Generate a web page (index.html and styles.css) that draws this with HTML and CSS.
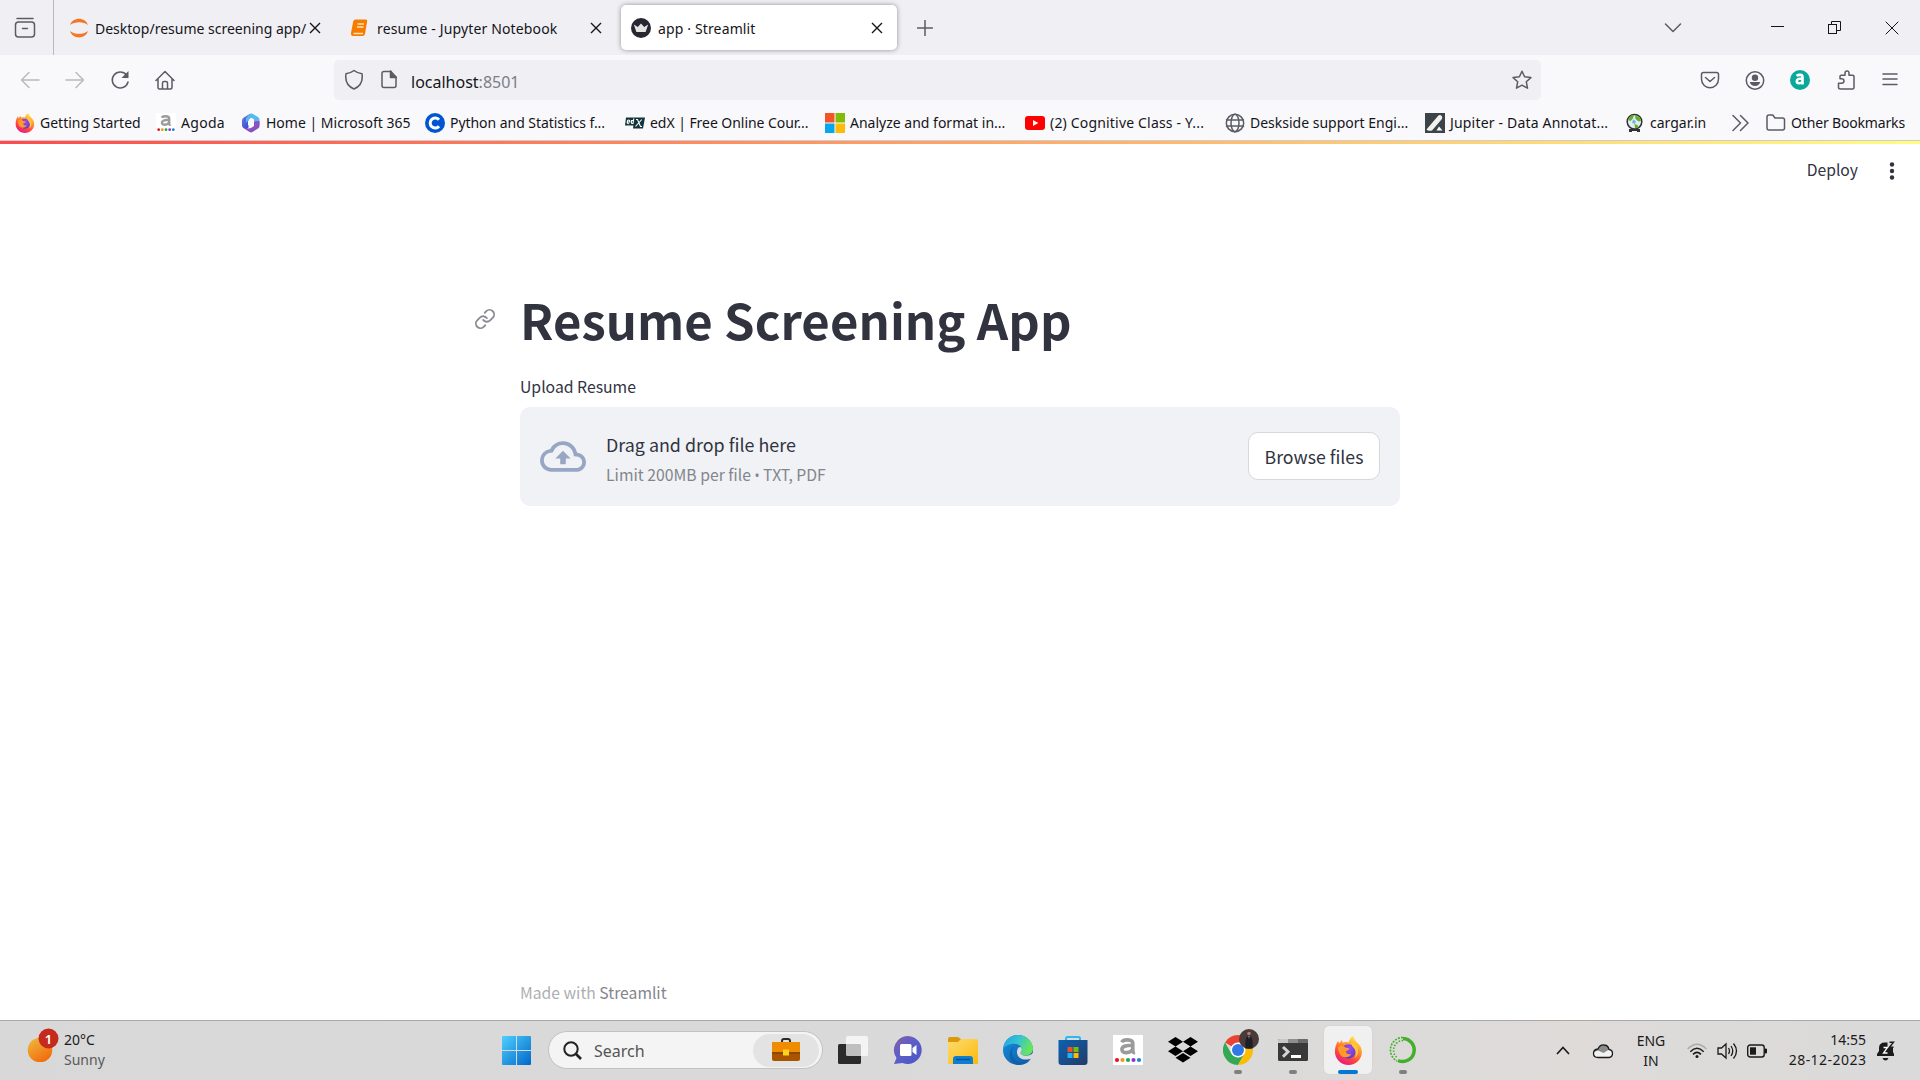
FILE: index.html
```html
<!DOCTYPE html>
<html lang="en">
<head>
<meta charset="utf-8">
<title>app · Streamlit</title>
<link rel="stylesheet" href="styles.css">
</head>
<body>
<svg class="defs" width="0" height="0" aria-hidden="true">
  <defs>
    <linearGradient id="ffBody" x1="0.8" y1="0" x2="0.3" y2="1"><stop offset="0" stop-color="#fff44f"/><stop offset=".35" stop-color="#ffa12e"/><stop offset=".7" stop-color="#ff4a3c"/><stop offset="1" stop-color="#e31587"/></linearGradient>
    <radialGradient id="ffGlobe" cx=".55" cy=".3" r=".75"><stop offset="0" stop-color="#a04af0"/><stop offset="1" stop-color="#5b3bc4"/></radialGradient>
    <linearGradient id="win" x1="0" y1="0" x2="1" y2="1"><stop offset="0" stop-color="#4fd0ff"/><stop offset="1" stop-color="#0067c8"/></linearGradient>
    <linearGradient id="chat" x1="0" y1="0" x2="1" y2="1"><stop offset="0" stop-color="#8a5fa8"/><stop offset=".45" stop-color="#5b5fc7"/><stop offset="1" stop-color="#4a55c9"/></linearGradient>
    <linearGradient id="folder" x1="0" y1="0" x2="1" y2="1"><stop offset="0" stop-color="#ffdc6e"/><stop offset="1" stop-color="#fbb90c"/></linearGradient>
    <linearGradient id="edgeTop" x1="0" y1="0" x2="1" y2=".4"><stop offset="0" stop-color="#1c9fe0"/><stop offset=".5" stop-color="#35c1d5"/><stop offset="1" stop-color="#66e560"/></linearGradient>
    <linearGradient id="edgeLow" x1="0" y1="0" x2="1" y2="1"><stop offset="0" stop-color="#1490df"/><stop offset="1" stop-color="#0c59a4"/></linearGradient>
    <linearGradient id="store" x1="0" y1="0" x2="1" y2="1"><stop offset="0" stop-color="#0a62b4"/><stop offset="1" stop-color="#243b66"/></linearGradient>
    <linearGradient id="sun" x1=".2" y1="0" x2=".8" y2="1"><stop offset="0" stop-color="#efb63a"/><stop offset="1" stop-color="#f2650a"/></linearGradient>
    <linearGradient id="m365" x1="0" y1="0" x2="1" y2="1"><stop offset="0" stop-color="#6a7ef0"/><stop offset="1" stop-color="#2540b8"/></linearGradient>
    <symbol id="firefox" viewBox="0 0 32 32">
      <path fill="url(#ffBody)" d="M21 0c1.200 2.500 1.800 4.200 4 6.500 3.800 3.200 5.800 6.700 5.800 11.200C30.800 25.500 24.300 32 16 32S1 25.500 1 17.200C1 12.500 2.500 8 4.600 5.200l1 3L8.700 4.300l.9 3.200c2-.9 4.400-1 6.400-.3C16.500 4.500 18.300 1.800 21 0z"/>
      <circle cx="16" cy="17" r="8" fill="url(#ffGlobe)"/>
      <path fill="#ff9a2a" d="M4.500 12.500c3-2.800 6.500-2 8.500.4 1.400 0 2.800.3 4 .9-.5 1.700-2.700 2.300-4 3 .4 2.700 3.300 4.200 6.300 2.700-2 4.500-9.500 5.500-12.300 1.200C5.300 18 4.500 15 4.500 12.500z"/>
      <path fill="#ffc83c" d="M19.500 6.500c5.200 2.600 8 7 6.800 12.500-.4 2-1.500 4.200-3.400 5.500 1.800-4 1.700-8.500-1.400-11.700-1.700-1.700-2.500-3.800-2-6.300z"/>
    </symbol>
    <symbol id="agoda" viewBox="0 0 30 30">
      <rect width="30" height="30" fill="#fff"/>
      <path fill="none" stroke="#9b9b9b" stroke-width="3.600" d="M8.800 7.200C10 4.400 19.800 3.400 19.800 8.500V15.500Q20 18 22 17.600M19.800 10.200C14 10.400 8.900 10.800 8.900 14.600 8.900 18.800 17.500 18.700 19.800 14"/>
      <circle cx="4" cy="25" r="2.100" fill="#e5131d"/><circle cx="9.500" cy="25" r="2.100" fill="#f7941e"/><circle cx="15" cy="25" r="2.100" fill="#1fa851"/><circle cx="20.500" cy="25" r="2.100" fill="#9035c9"/><circle cx="26" cy="25" r="2.100" fill="#1787d9"/>
    </symbol>
    <symbol id="close" viewBox="0 0 12 12"><path d="M1 1l10 10M11 1L1 11" fill="none" stroke="#15141a" stroke-width="1.400"/></symbol>
  </defs>
</svg>

<header class="browser">
  <div class="tabbar">
    <div class="archive">
      <svg class="line" width="22" height="22" viewBox="0 0 22 22"><path d="M3 1.500h16"/><rect x="1.500" y="5" width="19" height="15" rx="3"/><path d="M8.500 11.500h5"/></svg>
    </div>
    <div class="tabs">
      <div class="tab">
        <svg class="favicon" width="20" height="20" viewBox="0 0 20 20"><path fill="#f37726" d="M1 7C3.500-1.500 16.500-1.500 19 7 14 3.200 6 3.200 1 7zM1 13c2.500 8.500 15.500 8.500 18 0-5 3.800-13 3.800-18 0z"/></svg>
        <span class="tab-label first">Desktop/resume screening app/</span>
        <svg class="tab-close" width="12" height="12"><use href="#close"/></svg>
      </div>
      <div class="tab">
        <svg class="favicon" width="20" height="20" viewBox="0 0 20 20"><path fill="#f57c00" d="M5.500 1.500H16q1.500 0 1.200 1.500L15 16Q14.500 18 12.500 18H3Q.7 18 1 15L3.200 3.500Q3.600 1.500 5.500 1.500z"/><path d="M7.500 6H14M7 9h6.500M3.500 15.500h9.500" stroke="#ffe0b8" stroke-width="1.300" fill="none"/></svg>
        <span class="tab-label wide">resume - Jupyter Notebook</span>
        <svg class="tab-close" width="12" height="12"><use href="#close"/></svg>
      </div>
      <div class="tab active">
        <svg class="favicon" width="20" height="20" viewBox="0 0 20 20"><circle cx="10" cy="10" r="10" fill="#262730"/><path fill="#e4e4e4" d="M2.800 6.500l4 2.500L10 5.500l3.200 3.500 4-2.500-2.600 7.500H5.400z"/></svg>
        <span class="tab-label wide">app · Streamlit</span>
        <svg class="tab-close" width="12" height="12"><use href="#close"/></svg>
      </div>
    </div>
    <svg class="line new-tab" width="16" height="16" viewBox="0 0 16 16"><path d="M8 .5v15M.5 8h15"/></svg>
    <div class="window-controls">
      <svg class="line" width="18" height="10" viewBox="0 0 18 10"><path d="M1.500 1L9 8.500 16.500 1"/></svg>
      <svg class="thin" width="13" height="13" viewBox="0 0 13 13"><path d="M0 5.500h13"/></svg>
      <svg class="thin" width="13" height="13" viewBox="0 0 13 13"><rect x=".5" y="3.500" width="8" height="9"/><path d="M3.500 3.500v-3h9v9h-4"/></svg>
      <svg class="thin" width="14" height="14" viewBox="0 0 14 14"><path d="M.7.700l12.600 12.600M13.300.700L.7 13.300"/></svg>
    </div>
  </div>

  <div class="toolbar">
    <div class="nav">
      <svg class="line dim" width="20" height="20" viewBox="0 0 20 20"><path d="M19 10H2M9 2.500L1.500 10 9 17.500"/></svg>
      <svg class="line dim" width="20" height="20" viewBox="0 0 20 20"><path d="M1 10h17M11 2.500l7.500 7.500-7.500 7.500"/></svg>
      <svg class="line" width="20" height="20" viewBox="0 0 20 20"><path d="M16.500 5A8 8 0 1 0 18 12"/><path d="M18.500 1v7h-7z" fill="#5b5b66" stroke="none"/></svg>
      <svg class="line" width="20" height="20" viewBox="0 0 20 20"><path d="M1 10.500L10 1.500l9 9M3 9v8.500Q3 19 4.500 19h11q1.500 0 1.500-1.500V9M7.500 19v-6q0-1.500 1.500-1.500h2q1.500 0 1.500 1.500v6"/></svg>
    </div>
    <div class="urlbar">
      <svg class="line shield" width="20" height="22" viewBox="0 0 20 22"><path d="M10 1.500c2.500 2 5 2.800 8 3.200 1 6.500-1.500 12.500-8 15.300C3.500 17.200 1 11.200 2 4.700c3-.4 5.500-1.200 8-3.200z"/></svg>
      <svg class="line" width="16" height="20" viewBox="0 0 16 20"><path d="M10 1.500H3Q1 1.500 1 3.500v12q0 2 2 2h10q2 0 2-2V7"/><path d="M9.500 1l6 6.500h-6z" fill="#5b5b66"/></svg>
      <span class="url"><span class="host">localhost</span>:8501</span>
      <svg class="line star" width="20" height="20" viewBox="0 0 20 20"><path d="M10 1.200l2.600 5.600 6.300.8-4.600 4.200 1.200 6.400L10 15.200l-5.500 3 1.200-6.400L1.100 7.600l6.300-.8z"/></svg>
    </div>
    <div class="actions">
      <svg class="line" width="20" height="20" viewBox="0 0 20 20"><path d="M3.500 2.500h13q2 0 2 2V9c0 5-3.800 8.700-8.500 8.700S1.500 14 1.500 9V4.500q0-2 2-2zM5.500 7.500L10 11.500l4.500-4"/></svg>
      <svg class="line" width="20" height="20" viewBox="0 0 20 20"><circle cx="10" cy="10.500" r="8.700"/><circle cx="10" cy="7.700" r="3.200" fill="#5b5b66" stroke="none"/><path d="M4.800 12h10.400q-1 4-5.200 4t-5.200-4z" fill="#5b5b66" stroke="none"/></svg>
      <svg width="20" height="20" viewBox="0 0 20 20"><circle cx="10" cy="10" r="10" fill="#0aa89a"/><path fill="none" stroke="#fff" stroke-width="2.600" d="M6.500 5.800c2-1.400 6-1.500 6 1.200v7.500M12.500 8.500c-3.500 0-5.700.6-5.700 2.700 0 2.700 4.200 2.600 5.700.5"/></svg>
      <svg class="line" width="20" height="20" viewBox="0 0 20 20"><path d="M4 19h11.500q1.500 0 1.500-1.500V6.500q0-1.300-1.300-1.300H12V3.200Q12 1 10 1T8 3.200v2H4.200Q3 5.200 3 6.500v2.300h1.500q2.500 0 2.500 2.200t-2.500 2.200H1.500v4.300Q1.500 19 4 19z"/></svg>
      <svg class="line" width="16" height="14" viewBox="0 0 16 14"><path d="M1 1h14M1 6h14M1 11.500h14"/></svg>
    </div>
  </div>

  <nav class="bookmarks">
    <div class="bm bm-start"><svg width="20" height="20"><use href="#firefox"/></svg><span>Getting Started</span></div>
    <div class="bm bm-agoda"><svg width="20" height="20"><use href="#agoda"/></svg><span>Agoda</span></div>
    <div class="bm bm-office"><svg width="20" height="20" viewBox="0 0 20 20"><path fill="url(#m365)" d="M9 .8L2.500 4.800Q1 5.800 1 7.500v5q0 1.700 1.500 2.600l3 1.400 2-2V6.500L12 3z"/><path fill="#57b8f0" d="M8.500 1q1.500-1 3-.2l5.500 3.200Q18.500 5 18.500 7v5L13 8.500V6.300L10 4.600 7.500 7l-2.500 3V5z"/><path fill="#8c4fc0" d="M18.500 8v5q0 1.700-1.500 2.500l-5.500 3.500q-1.500.8-3 0l-6-4 5 .5 2.500-.5 3-2V8.500z"/><path fill="#f9f9fb" d="M10 6.300l3 1.900v3.600l-3 1.900-3-1.900V8.200z"/></svg><span>Home | Microsoft 365</span></div>
    <div class="bm"><svg width="20" height="20" viewBox="0 0 20 20"><circle cx="10" cy="10" r="10" fill="#0056d2"/><path fill="none" stroke="#fff" stroke-width="3" d="M14 6.800a5 5 0 1 0 0 6.400"/></svg><span class="cut">Python and Statistics f...</span></div>
    <div class="bm"><svg width="20" height="20" viewBox="0 0 20 20"><path fill="#14343b" d="M1 4.500h12l-1.500 8H0zM9.500 4.500H20l-2 11H8z"/><path fill="none" stroke="#fff" stroke-width="1.100" d="M2.200 9h2.500q.3-2-1-2T2.200 9t2 1.700M8.800 5.500L8 10.500H6.800Q5.800 9 6.600 7.500H8.400M11 6.500h1.500l3 7H17M16.800 6.500L10.500 13.500"/></svg><span class="cut">edX | Free Online Cour...</span></div>
    <div class="bm"><svg width="20" height="20" viewBox="0 0 20 20"><path fill="#f35325" d="M0 0h9.500v9.500H0z"/><path fill="#81bc06" d="M10.500 0H20v9.500h-9.500z"/><path fill="#05a6f0" d="M0 10.500h9.500V20H0z"/><path fill="#ffba08" d="M10.500 10.500H20V20h-9.500z"/></svg><span>Analyze and format in...</span></div>
    <div class="bm"><svg width="20" height="20" viewBox="0 0 20 20"><rect y="3" width="20" height="14" rx="3" fill="#f00"/><path d="M8 7l5.300 3L8 13z" fill="#fff"/></svg><span class="wider">(2) Cognitive Class - Y...</span></div>
    <div class="bm"><svg class="line" width="20" height="20" viewBox="0 0 20 20"><circle cx="10" cy="10" r="8.700"/><ellipse cx="10" cy="10" rx="4" ry="8.700"/><path d="M1.500 7h17M1.500 13h17"/></svg><span>Deskside support Engi...</span></div>
    <div class="bm"><svg width="20" height="20" viewBox="0 0 20 20"><rect width="20" height="20" fill="#3c4447"/><path d="M1.500 16.500L13 3q2-2 4 .5.8 1.500-.5 3L7 17.500q-4 1-5.500-1z" fill="#f2f2ee"/><path d="M11.500 17.500l2.500-4 3.500 4z" fill="#fff"/></svg><span class="wider">Jupiter - Data Annotat...</span></div>
    <div class="bm bm-cargar"><svg width="20" height="20" viewBox="0 0 20 20"><circle cx="9.500" cy="8.700" r="7.300" fill="#e4eef2" stroke="#303332" stroke-width="1.500"/><path fill="#62b030" d="M3.500 6l3-3.800L9 2 8 5.500 5 8.500zM10 2.500l4.500 1.500 1.500 4-2.500.5-3-2.500zM9.500 11l3 1 1 2.500-3.500 1z"/><path fill="#7fb4dc" d="M8 6.500l3 1.500-1 3-3-1z"/><path d="M4 16h11v3h-3v-1H7v1H4z" fill="#303332"/></svg><span>cargar.in</span></div>
    <svg class="line more" width="17" height="18" viewBox="0 0 17 18"><path d="M1 1.500L8.500 9 1 16.500M8.500 1.500L16 9l-7.500 7.500"/></svg>
    <div class="bm bm-other"><svg class="line" width="20" height="20" viewBox="0 0 20 20"><path d="M1 15V4Q1 2 3 2h3.800L9 5h7.500Q18.500 5 18.500 7v8q0 2-2 2H3q-2 0-2-2z"/></svg><span>Other Bookmarks</span></div>
  </nav>
</header>

<main class="app">
  <div class="decoration"></div>
  <div class="app-header">
    <span class="deploy">Deploy</span>
    <svg width="6" height="18" viewBox="0 0 6 18" fill="#31333f"><circle cx="3" cy="2.500" r="2.200"/><circle cx="3" cy="9" r="2.200"/><circle cx="3" cy="15.500" r="2.200"/></svg>
  </div>
  <section class="content">
    <div class="title-row">
      <svg class="anchor" width="22" height="22" viewBox="0 0 24 24" fill="none" stroke="#8b8c94" stroke-width="2" stroke-linecap="round" stroke-linejoin="round"><path d="M10 13a5 5 0 0 0 7.540.54l3-3a5 5 0 0 0-7.070-7.070l-1.720 1.710"/><path d="M14 11a5 5 0 0 0-7.540-.54l-3 3a5 5 0 0 0 7.070 7.070l1.710-1.710"/></svg>
      <h1>Resume Screening App</h1>
    </div>
    <label class="upload-label">Upload Resume</label>
    <div class="dropzone">
      <svg class="cloud" width="46" height="31" viewBox="0 4 24 16"><path fill="#97a6c3" d="M19.350 10.040A7.490 7.490 0 0 0 12 4C9.110 4 6.600 5.640 5.350 8.040A5.994 5.994 0 0 0 0 14c0 3.310 2.690 6 6 6h13c2.760 0 5-2.240 5-5 0-2.640-2.050-4.780-4.650-4.960zM19 18H6c-2.210 0-4-1.790-4-4 0-2.050 1.530-3.760 3.560-3.970l1.070-.11.5-.95A5.469 5.469 0 0 1 12 6c2.620 0 4.880 1.860 5.390 4.430l.3 1.500 1.530.11A2.980 2.980 0 0 1 22 15c0 1.650-1.350 3-3 3zM8 13h2.550v3h2.900v-3H16l-4-4z"/></svg>
      <div class="drop-text">
        <span class="drop-main">Drag and drop file here</span>
        <span class="drop-limit">Limit 200MB per file <span class="bullet">•</span> TXT, PDF</span>
      </div>
      <button class="browse" type="button">Browse files</button>
    </div>
  </section>
  <footer class="made"><span>Made with</span> <a>Streamlit</a></footer>
</main>

<div class="taskbar">
  <div class="weather">
    <svg width="37" height="34" viewBox="0 0 37 34"><circle cx="13" cy="22" r="12.300" fill="url(#sun)"/><circle cx="21.500" cy="10.500" r="10" fill="#c42b1c"/><text x="21.500" y="15.500" class="badge-num">1</text></svg>
    <div class="weather-text"><span>20°C</span><span class="muted">Sunny</span></div>
  </div>
  <div class="task-center">
    <svg class="start" width="29" height="29" viewBox="0 0 29 29"><path fill="url(#win)" d="M1 0h13v14H0V1q0-1 1-1zM15 0h13q1 0 1 1v13H15zM0 15h14v14H1q-1 0-1-1zM15 15h14v13q0 1-1 1H15z"/></svg>
    <div class="search">
      <svg width="19" height="19" viewBox="0 0 19 19" fill="none" stroke="#222" stroke-width="2"><circle cx="8" cy="8" r="6.700"/><path d="M13 13l5 5" stroke-width="2.600"/></svg>
      <span>Search</span>
      <div class="search-art">
        <svg width="28" height="24" viewBox="0 0 28 24"><path d="M10 5V3q0-2 2-2h4q2 0 2 2v2" fill="none" stroke="#2b2b2b" stroke-width="2"/><rect y="4" width="28" height="19" rx="2" fill="#a95500"/><path d="M0 6q0-2 2-2h24q2 0 2 2v9H0z" fill="#f08c00"/><path d="M0 14h28v2H0z" fill="#8c4700"/><rect x="11" y="11.500" width="6" height="6" fill="#ffd21e"/></svg>
      </div>
    </div>
    <div class="task"><svg width="30" height="30" viewBox="0 0 30 30"><rect y="9" width="23" height="20" rx="1.500" fill="#2b2b2b"/><rect x="8" y="1" width="22" height="20" rx="1.500" fill="#fff" fill-opacity=".7"/></svg></div>
    <div class="task"><svg width="30" height="30" viewBox="0 0 30 30"><path fill="url(#chat)" d="M15 1a14 14 0 1 1-5.500 27L1 29l2.500-6A14 14 0 0 1 15 1z"/><rect x="7" y="9" width="11.500" height="12" rx="1.500" fill="#fff"/><path d="M19.500 13l4-3v10l-4-3z" fill="#fff"/></svg></div>
    <div class="task"><svg width="30" height="30" viewBox="0 0 30 30"><path d="M0 4q0-2 2-2h8l3 2v6H0z" fill="#dc9a0a"/><path d="M0 7h10l3-3h15q2 0 2 2v23H0z" fill="url(#folder)"/><path d="M5 29v-5q0-3 3-3h14q3 0 3 3v5z" fill="#0f7dd0"/><path d="M8 24.500h14" stroke="#084f8a" stroke-width="1.300"/></svg></div>
    <div class="task"><svg width="30" height="30" viewBox="0 0 30 30"><circle cx="15" cy="15" r="15" fill="url(#edgeLow)"/><path fill="#135fa8" d="M12 11c-4 3-4.500 10 1 14.500 4 3 10 3 15-2.500-1.500 4-6 7-12 7C9 30 6 23 7 18c.6-3 2.500-5.500 5-7z"/><path fill="url(#edgeTop)" d="M0 14C1 5.500 7 0 15 0c9 0 15 6.500 15 13.500 0 4.500-3.500 7-7.500 7-3.500 0-5-1.500-5-2.500 0-.7 1.300-1.500 1.300-3.500 0-3-2.800-5.700-7.300-5.700C6.500 8.800 2 11 0 14z"/><path fill="#dadada" d="M18.800 14.500c0 2-1.300 2.800-1.300 3.500 0 1.200 2 2.700 5.500 2.700 3 0 5-.9 7-2.700v4l-2 1.500c-3 1.500-8 1.600-11-.5-3.500-2.500-4-7.500-1.500-10.500 2-1.500 3.300 0 3.300 2z"/></svg></div>
    <div class="task"><svg width="30" height="30" viewBox="0 0 30 30"><path d="M8 6V3.500Q8 2 9.500 2h11Q22 2 22 3.500V6" fill="none" stroke="#2fb7ee" stroke-width="2"/><path d="M.5 5h29v22q0 3-3 3h-23q-3 0-3-3z" fill="url(#store)"/><path fill="#f25022" d="M9.500 12h5v5h-5z"/><path fill="#7fba00" d="M15.500 12h5v5h-5z"/><path fill="#1fb0f5" d="M9.500 18h5v5h-5z"/><path fill="#ffb900" d="M15.500 18h5v5h-5z"/></svg></div>
    <div class="task"><svg width="30" height="30"><use href="#agoda"/></svg></div>
    <div class="task"><svg width="30" height="30" viewBox="0 0 30 30"><path d="M7.500 2L15 6.800l-7.500 4.700L0 6.800zM22.500 2L30 6.800l-7.500 4.700L15 6.800zM7.500 11.500L15 16.300 7.500 21 0 16.300zM22.500 11.500l7.500 4.800-7.500 4.700-7.500-4.700zM15 18l7.500 4.800L15 27.500l-7.500-4.700z"/></svg></div>
    <div class="task running chrome"><svg width="36" height="36" viewBox="0 0 36 36"><path fill="#ea4335" d="M15 21L2 13.500a15 15 0 0 1 26 0H15z"/><path fill="#34a853" d="M15 36A15 15 0 0 1 2 13.500L8.500 24.700 15 28.500l6.500-3.800z"/><path fill="#fbbc05" d="M28 13.500A15 15 0 0 1 15 36l6.500-11.300L22 17l-7-3.500z"/><circle cx="15" cy="21" r="7.500" fill="#fff"/><circle cx="15" cy="21" r="6" fill="#3078e8"/><circle cx="26" cy="10" r="10" fill="#4a3b38"/><path d="M22.500 19.500q-1-9 1.500-12h4q2.500 3 1.500 12z" fill="#1d1f26"/><circle cx="26" cy="4.500" r="1.800" fill="#a9806c"/><path d="M25.500 7h1L26 10z" fill="#c9c9d0"/></svg></div>
    <div class="task running"><svg width="30" height="30" viewBox="0 0 30 30"><rect y="4" width="30" height="22" rx="1.500" fill="#393939"/><path d="M0 8V5.500Q0 4 1.500 4H10v4z" fill="#c8c8c8"/><path d="M10 4h10v4H10z" fill="#8f8f8f"/><path d="M20 4h8.500Q30 4 30 5.500V8H20z" fill="#6a6a6a"/><path d="M5 12l5 4.700-5 5" fill="none" stroke="#d5d5d5" stroke-width="3"/><path d="M13 21.500h10" stroke="#fff" stroke-width="3"/></svg></div>
    <div class="task focused"><svg width="29" height="29"><use href="#firefox"/></svg></div>
    <div class="task running"><svg width="30" height="30" viewBox="0 0 30 30" fill="none" stroke="#43b02a"><path d="M15 3.500a11.500 11.500 0 1 1-5 22" stroke-width="3.500"/><path d="M15 2.500A12.500 12.500 0 0 0 9 26" stroke-width="1.600" stroke-dasharray="2 1.200"/><path d="M15 5.500A9.700 9.700 0 0 0 9.500 23" stroke-width="1.600" stroke-dasharray="1.500 1.500"/></svg></div>
  </div>
  <div class="tray">
    <svg width="14" height="9" viewBox="0 0 14 9" fill="none" stroke="#1b1b1b" stroke-width="1.700"><path d="M1 8l6-6.500L13 8"/></svg>
    <svg class="onedrive" width="22" height="16" viewBox="0 0 22 16"><path d="M6 14.500Q1.500 14.500 1.500 10.500T6 6q2-4.500 6-4 4 0 5 4.500 3.500.5 3.500 4t-3.500 4z" fill="#f2f2f2"/><path d="M6 6q2-4.500 6-4 4 0 5 4.500l-5.500 3.500L6 7.500 2 9q1-3 4-3z" fill="#8c8c8c"/><path d="M6 14.500Q1.500 14.500 1.500 10.500T6 6q2-4.500 6-4 4 0 5 4.500 3.500.5 3.500 4t-3.500 4z" fill="none" stroke="#1b1b1b" stroke-width="1.300"/></svg>
    <div class="lang"><span>ENG</span><span>IN</span></div>
    <svg class="wifi" width="20" height="16" viewBox="0 0 20 16" fill="none" stroke="#1b1b1b" stroke-width="1.500"><path d="M.7 6q9.300-9.500 18.600 0" stroke="#aaa"/><path d="M3.300 8.700q6.700-6.800 13.400 0M6 11.400q4-4 8 0"/><circle cx="10" cy="13.500" r="1.500" fill="#1b1b1b" stroke="none"/></svg>
    <svg class="volume" width="21" height="18" viewBox="0 0 21 18" fill="none" stroke="#1b1b1b" stroke-width="1.300"><path d="M1 6h3.500L9 2v14l-4.500-4H1z"/><path d="M11.500 6q2 3 0 6M14 4q3.500 5 0 10M16.500 1.500q6 7.500 0 15"/></svg>
    <svg class="battery" width="20" height="14" viewBox="0 0 20 14"><rect x=".7" y="1" width="16.500" height="12" rx="2.500" fill="none" stroke="#1b1b1b" stroke-width="1.400"/><rect x="3" y="3.300" width="6" height="7.400" fill="#1b1b1b"/><path d="M18 5h1.500v4H18z" stroke="#1b1b1b"/></svg>
    <div class="clock"><span>14:55</span><span class="date">28-12-2023</span></div>
    <svg class="bell" width="18" height="20" viewBox="0 0 18 20"><path fill="#1b1b1b" d="M2 7q0-5.500 6-5.500h2.500V7H16v4l1 2v2H0v-2l2-3zM5.500 17h6q-1 2.500-3 2.500t-3-2.500z"/><path d="M6.500 6.500h4l-4 5.500h4" fill="none" stroke="#fff" stroke-width="1.300"/><path d="M12.500 1.200h4l-4 5h4" fill="none" stroke="#1b1b1b" stroke-width="1.400"/></svg>
  </div>
</div>
</body>
</html>
```
FILE: styles.css
```css
* { box-sizing: border-box; }
html, body { height: 100%; margin: 0; }
body {
  display: flex;
  flex-direction: column;
  overflow: hidden;
  background: #fff;
  color: #15141a;
  font: 14px/20px "Noto Sans", "Open Sans", sans-serif;
}
svg { flex: none; display: block; }
span { white-space: nowrap; }
.defs { position: absolute; }
.line { fill: none; stroke: #5b5b66; stroke-width: 1.500; stroke-linecap: round; stroke-linejoin: round; }
.thin { fill: none; stroke: #15141a; stroke-width: 1; }
.dim { opacity: .4; }

/* Browser chrome */
.browser { flex: none; height: 141px; background: #f9f9fb; border-bottom: 1px solid #ccccd2; }
.tabbar { display: flex; height: 55px; background: #f0f0f4; }
.archive { width: 54px; padding: 17px 0 0 14px; border-right: 1px solid #b9b9c0; }
.tabs { display: flex; gap: 5px; padding: 5px 0 5px 5px; }
.tab { display: flex; align-items: center; width: 276px; padding: 0 14px 0 10px; border-radius: 5px; }
.tab.active { background: #fff; box-shadow: 0 0 5px rgba(0, 0, 0, .4); }
.tab-label { flex: 1; min-width: 0; margin-left: 7px; padding-top: 2px; }
.tab-label.first { margin-left: 6px; }
.wide { letter-spacing: .14px; }
.wider { letter-spacing: .18px; }
.new-tab { margin: 20px 0 0 20px; }
.window-controls { display: flex; align-items: center; gap: 44px; margin-left: auto; padding: 0 21px 0 0; }
.window-controls svg:first-child { margin-right: 45px; }

.toolbar { display: flex; align-items: center; height: 50px; padding: 0 22px 0 20px; }
.nav { display: flex; gap: 25px; }
.urlbar { display: flex; align-items: center; width: 1207px; height: 40px; margin-left: 159px; padding: 0 9px 0 10px; border-radius: 5px; background: #f0f0f4; }
.shield { margin-right: 17px; }
.url { margin: 3px 0 0 14px; font-size: 16px; color: #7d7d86; }
.host { color: #15141a; }
.star { margin-left: auto; }
.actions { display: flex; align-items: center; gap: 25px; margin-left: auto; }
.actions svg:nth-child(-n+3) { position: relative; left: -2px; }

.bookmarks { display: flex; align-items: center; height: 35px; padding: 0 0 0 15px; }
.bm { display: flex; align-items: center; gap: 5px; width: 200px; }
.bm span { padding-top: 1px; }
.bm-start { width: 141px; }
.bm-agoda { width: 85px; }
.bm-office { width: 184px; }
.bm-cargar { width: 107px; }
.bm-agoda span { letter-spacing: .3px; }
.cut { letter-spacing: -.05px; }
.bm-other { width: auto; margin-left: 17px; }
.bm-other span { letter-spacing: -.16px; }

/* Streamlit page */
.app { position: relative; flex: 1; display: flex; flex-direction: column; color: #31333f; font-family: "Noto Sans CJK SC", "Open Sans", sans-serif; }
.decoration { height: 3px; background: linear-gradient(90deg, #ff4b4b, #fffd80); }
.app-header { display: flex; justify-content: flex-end; align-items: center; gap: 31px; height: 54px; padding-right: 25px; }
.deploy { margin-bottom: 2px; font-size: 15.700px; }
.content { width: 880px; margin: 92px auto 0; }
.title-row { display: flex; align-items: center; height: 57px; margin-left: -46px; }
h1 { margin: 0 0 0 24px; font-size: 49px; line-height: 57px; font-weight: 700; letter-spacing: .06px; white-space: nowrap; }
.anchor { margin-top: 1px; }
.upload-label { display: block; margin-top: 28px; font-size: 15.770px; line-height: 24px; }
.dropzone { display: flex; align-items: center; height: 99px; margin-top: 8px; padding: 0 20px; border-radius: 10px; background: #f0f2f6; }
.drop-text { display: flex; flex-direction: column; margin: 4px 0 0 20px; }
.drop-main { font-size: 17.890px; line-height: 31px; }
.drop-limit { font-size: 15.750px; line-height: 29px; color: #84858c; }
.bullet { font-family: "Noto Sans", sans-serif; font-size: 13.500px; line-height: 1; }
.browse { width: 132px; height: 48px; margin: 0 0 1px auto; padding: 0 0 1px; border: 1px solid #d6d7db; border-radius: 10px; background: #fff; color: #31333f; font: 17.700px/24px "Noto Sans CJK SC", "Open Sans", sans-serif; }
.made { width: 880px; margin: auto auto 15px; font-size: 15.700px; line-height: 24px; color: #adaeb2; }
.made a { color: #83848c; }

/* Windows taskbar */
.taskbar { flex: none; display: flex; justify-content: space-between; height: 60px; border-top: 1px solid #a9a9a9; background: linear-gradient(90deg, #d8d8d8, #dadada 60%, #dedbd9 82%, #dadada); color: #1b1b1b; }
.weather { display: flex; width: 502px; padding: 7px 0 0 27px; }
.weather-text, .lang, .clock { display: flex; flex-direction: column; }
.weather-text { padding-top: 2px; }
.muted { color: #5a5a5a; }
.badge-num { fill: #fff; font-size: 13px; font-weight: 600; text-anchor: middle; }
.task-center { display: flex; flex: 1; align-items: center; padding-bottom: 1px; }
.search { display: flex; align-items: center; width: 275px; height: 38px; margin: 0 2px 0 17px; padding: 0 3px 0 14px; border: 1px solid #c2c2c2; border-radius: 19px; background: #f4f4f4; }
.search span { margin-left: 12px; padding-top: 1px; font-size: 16px; color: #555; }
.search-art { display: flex; align-items: center; justify-content: center; width: 66px; height: 33px; margin-left: auto; border-radius: 17px; background: #e3e3e3; }
.task { position: relative; display: flex; align-items: center; justify-content: center; width: 48px; height: 48px; margin: 0 0 0 7px; border-radius: 5px; }
.search + .task { margin-left: 4px; }
.chrome { padding: 0 0 6px 6px; }
.focused { background: #f0f0f0; box-shadow: 0 0 1px #bbb; }
.running::after, .focused::after { content: ""; position: absolute; bottom: 0; left: 20px; width: 8px; height: 4px; border-radius: 2px; background: #7f7f7f; }
.focused::after { left: 14px; width: 20px; background: #0078d4; }
.tray { display: flex; align-items: center; width: 364px; }
.onedrive { margin: 0 23px 0 22px; }
.lang { width: 28px; align-items: center; margin-right: 22px; }
.wifi { margin-right: 10px; }
.volume { margin-right: 9px; }
.battery { margin-right: 20px; }
.clock { width: 79px; align-items: flex-end; padding-bottom: 2px; }
.date { letter-spacing: .47px; margin-right: -.470px; }
.bell { margin-left: 11px; }
```
